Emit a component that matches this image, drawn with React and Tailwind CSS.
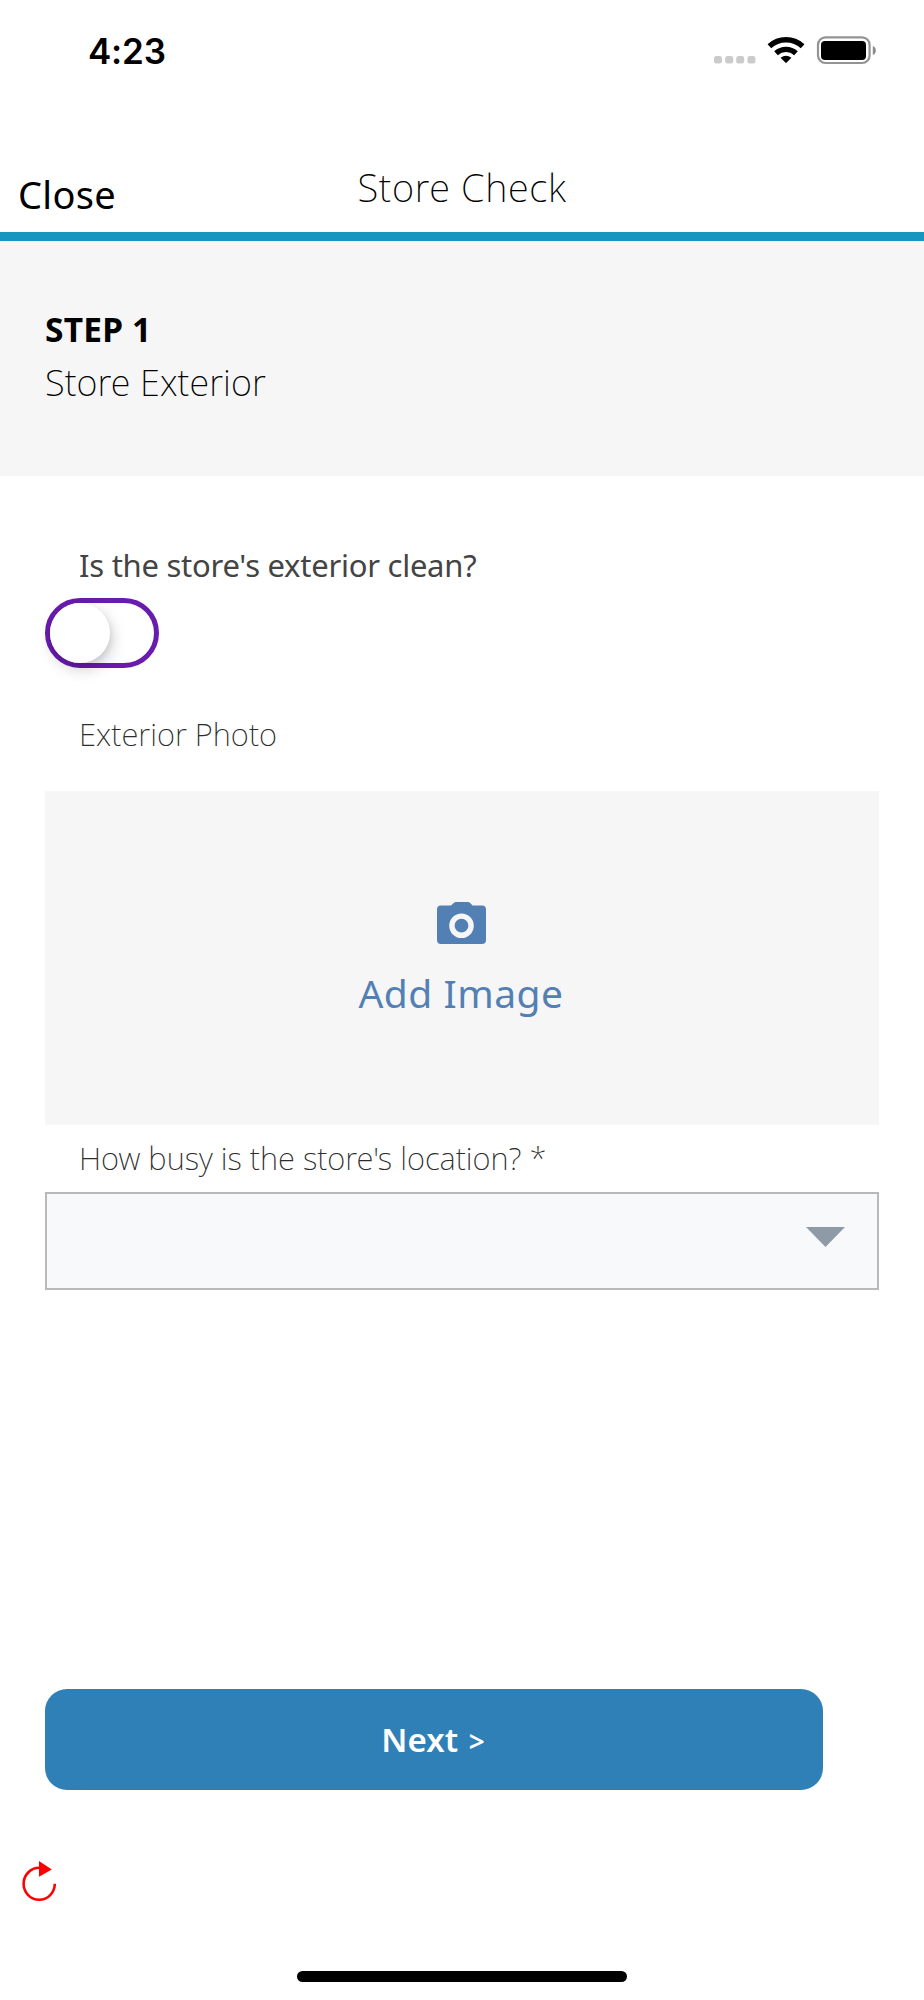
function StatusBar() {
  return (
    <div className="flex h-[102px] items-start justify-between pl-[88px] pr-[46px]">
      <div className="mt-[26px] font-[Inter,sans-serif] text-[35px] font-semibold leading-[50px] tracking-[-0.2px] text-black">4:23</div>
      <svg className="mt-[30px] h-10 w-[166px]" viewBox="712 30 166 40">
        <g fill="#cbcbcb">
          <rect x="714" y="56" width="8" height="7.6" rx="2.4" />
          <rect x="725.2" y="56" width="8" height="7.6" rx="2.4" />
          <rect x="736.2" y="56" width="8" height="7.6" rx="2.4" />
          <rect x="747.4" y="56" width="8" height="7.6" rx="2.4" />
        </g>
        <g fill="none" stroke="#000" strokeWidth="5.4">
          <path d="M769.4 46.2A24.5 24.5 0 0 1 802.6 46.2" />
          <path d="M776 53.2A15 15 0 0 1 796 53.2" />
        </g>
        <path d="M780.6 57.8Q786 53.6 791.4 57.8L786.7 62.6Q786 63.3 785.3 62.6Z" />
        <rect x="818" y="37.4" width="51.6" height="25.6" rx="7.5" fill="#fff" stroke="#949494" strokeWidth="2.2" />
        <rect x="821" y="41" width="45" height="19" rx="4" />
        <path d="M872.8 46Q875.8 47.4 875.8 50.5Q875.8 53.6 872.8 55Z" fill="#8a8a8a" />
      </svg>
    </div>
  );
}

function Header() {
  return (
    <header className="grid h-[139px] grid-cols-[1fr_auto_1fr] items-start border-b-[9px] border-[#1797c0] px-[18px] text-[38px] leading-[52px] text-black">
      <button className="mt-[66px] justify-self-start whitespace-nowrap tracking-[0.3px]">Close</button>
      <h1 className="mt-[59px] whitespace-nowrap font-extralight tracking-[0.65px]">Store Check</h1>
    </header>
  );
}

function Toggle() {
  return (
    <div className="h-[70px] w-[114px] rounded-full border-[5px] border-[#691bb0]">
      <div className="size-[60px] rounded-full bg-white shadow-[2px_6px_16px_rgba(0,0,0,0.2),2px_3px_5px_rgba(0,0,0,0.06)]" />
    </div>
  );
}

export default function App() {
  return (
    <div className="flex h-[2000px] w-[924px] flex-col overflow-hidden bg-white font-['Noto_Sans','Open_Sans',sans-serif]">
      <StatusBar />
      <Header />
      <section className="flex h-[235px] flex-col items-start bg-[#f6f6f6] pl-[45px] pt-[63px]">
        <div className="text-[33.5px] font-bold leading-[50px] tracking-[0.2px] text-black">STEP 1</div>
        <div className="mt-[4px] text-[36px] font-extralight leading-[50px] tracking-[0.1px] text-black">Store Exterior</div>
      </section>
      <main className="flex flex-1 flex-col items-start px-[45px] pt-[68px] text-[#444]">
        <div className="ml-[34px] h-[54px] whitespace-nowrap text-[31px] leading-[42px] tracking-[-0.26px]">Is the store's exterior clean?</div>
        <Toggle />
        <div className="ml-[34px] mt-[45px] h-[78px] whitespace-nowrap text-[31px] font-extralight leading-[42px] text-[#2c2c2c]">Exterior Photo</div>
        <button className="flex h-[334px] w-full flex-col items-center bg-[#f6f6f6] pr-[2px] pt-[111px] text-[#5280b4]">
          <svg className="h-[42px] w-[49px]" viewBox="0 0 49 42" fill="currentColor">
            <path d="M4 3.5H14L17 .8Q17.8 0 19 0H31Q32.2 0 33 .8L35.5 3.5H45Q49 3.5 49 7.5V38Q49 42 45 42H4Q0 42 0 38V7.5Q0 3.5 4 3.5Z" />
            <circle cx="24.5" cy="23.7" r="9.6" fill="none" stroke="#f6f6f6" strokeWidth="5.4" />
          </svg>
          <span className="mt-[23px] whitespace-nowrap text-[39px] leading-[52px] tracking-[0.5px]">Add Image</span>
        </button>
        <div className="ml-[34px] mt-[12px] h-[55px] whitespace-nowrap text-[31px] font-extralight leading-[42px] tracking-[-0.02px] text-[#2c2c2c]">How busy is the store's location? *</div>
        <div className="flex h-[98px] w-full justify-end border-2 border-[#b9b9b9] bg-[#f8f9fb] pr-[32px] pt-[33px]">
          <svg className="h-5 w-[39px]" viewBox="0 0 39 20" fill="#8e9aa6"><path d="M0 0H39L19.5 20Z" /></svg>
        </div>
        <button className="mt-[399px] h-[101px] w-[778px] whitespace-nowrap rounded-[22px] bg-[#2f80b7] pr-[2px] text-[33px] font-semibold text-white">Next <span className="ml-[2px] text-[28px]">&gt;</span></button>
      </main>
      <footer className="flex h-[144px] flex-col">
        <svg className="ml-5 mt-[2px] h-[46px] w-10" viewBox="20 1859 40 46">
          <path d="M54.8 1884.8A15.6 16 0 1 1 39.2 1868.8" fill="none" stroke="#f00" strokeWidth="2.6" />
          <path d="M39 1862L51.8 1870.4L39 1877.8Z" fill="#f00" />
        </svg>
        <div className="mt-[67px] h-[11px] w-[330px] self-center rounded-full bg-black" />
      </footer>
    </div>
  );
}
